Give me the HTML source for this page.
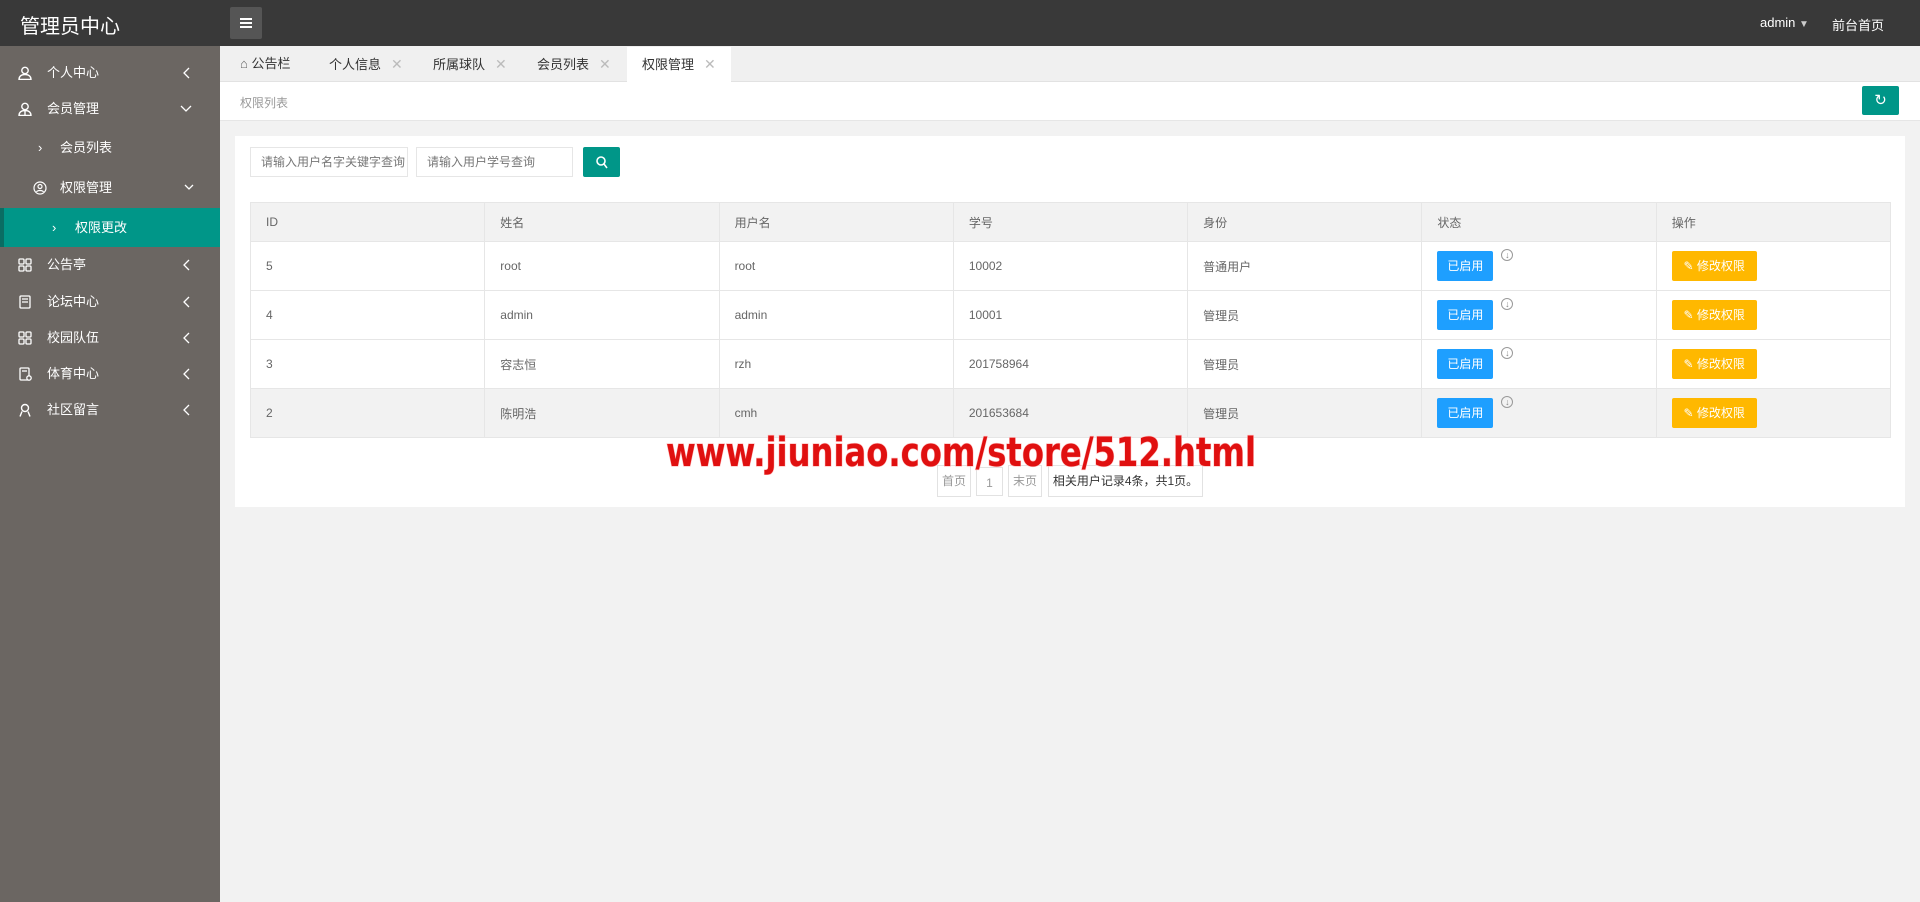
<!DOCTYPE html>
<html><head><meta charset="utf-8"><style>
*{margin:0;padding:0;box-sizing:border-box}
body{width:1920px;height:902px;overflow:hidden;background:#f2f2f2;font-family:"Liberation Sans","Noto Sans CJK SC",sans-serif;font-size:13px;color:#666;position:relative}
.abs{position:absolute}
.hdr{left:0;top:0;width:1920px;height:46px;background:#393939}
.side{left:0;top:46px;width:220px;height:856px;background:#6b6662}
.mi{position:absolute;left:0;width:220px;color:#fff;font-size:13px;height:36px;line-height:36px}
.mi .t{position:absolute;left:47px}
.mi .ic{position:absolute;left:18px;top:11px;width:14px;height:14px}
.mi .ar{position:absolute;left:182px;top:12px;width:8px;height:12px}
.tabs{left:220px;top:46px;width:1700px;height:36px;background:#f0f0f0;border-bottom:1px solid #e2e2e2}
.tab{position:absolute;top:46px;height:36px;line-height:36px;font-size:13px;color:#333}
.x{color:#bbb;font-size:14px;margin-left:10px}
.bc{left:220px;top:82px;width:1700px;height:39px;background:#fff;border-bottom:1px solid #e6e6e6}
.card{left:235px;top:136px;width:1670px;height:371px;background:#fff}
.inp{position:absolute;top:147px;height:30px;border:1px solid #e6e6e6;background:#fff;color:#777;font-size:12px;line-height:28px;padding-left:10px}
table{position:absolute;left:250px;top:202px;width:1641px;border-collapse:collapse}
td,th{border:1px solid #e6e6e6;text-align:left;padding-left:15px;font-weight:normal;color:#666;font-size:12px;width:234px}
th{height:39px;background:#f2f2f2}
td{height:49px}
.b1{display:inline-block;width:56px;height:30px;line-height:30px;text-align:center;background:#1E9FFF;color:#fff;border-radius:2px;font-size:12px;vertical-align:middle}
.b2{display:inline-block;width:85px;height:30px;line-height:30px;text-align:center;background:#FFB800;color:#fff;border-radius:2px;font-size:12px}
.circ{display:inline-block;width:12px;height:12px;border:1px solid #999;border-radius:50%;font-size:9px;line-height:10px;text-align:center;color:#888;margin-left:8px;vertical-align:top;margin-top:-2px}
.pg{position:absolute;top:465px;height:32px;border:1px solid #e2e2e2;line-height:30px;text-align:center;font-size:12px;color:#999;background:#fff}
</style></head><body>
<div class="abs hdr"></div>
<div class="abs" style="left:20px;top:10px;color:#fff;font-size:20px">管理员中心</div>
<div class="abs" style="left:230px;top:7px;width:32px;height:32px;background:#555;border-radius:2px">
<div class="abs" style="left:10px;top:11px;width:12px;height:1.5px;background:#fff"></div>
<div class="abs" style="left:10px;top:15px;width:12px;height:1.5px;background:#fff"></div>
<div class="abs" style="left:10px;top:19px;width:12px;height:1.5px;background:#fff"></div></div>
<div class="abs" style="left:1760px;top:15px;color:#fff;font-size:13px">admin <span style="font-size:10px;color:#ccc">▼</span></div>
<div class="abs" style="left:1832px;top:15px;color:#fff;font-size:13px">前台首页</div>

<div class="abs side"></div>
<div class="mi" style="top:55px"><svg class="ic" viewBox="0 0 14 14"><circle cx="7" cy="4.5" r="3.2" fill="none" stroke="#fff" stroke-width="1.4"/><path d="M1 13.5c0-3.5 2.7-5 6-5s6 1.5 6 5z" fill="none" stroke="#fff" stroke-width="1.4"/></svg><span class="t">个人中心</span><svg class="ar" viewBox="0 0 8 12"><path d="M7 1L2 6l5 5" fill="none" stroke="#fff" stroke-width="1.3"/></svg></div>
<div class="mi" style="top:91px"><svg class="ic" viewBox="0 0 14 14"><circle cx="7" cy="4.5" r="3.2" fill="none" stroke="#fff" stroke-width="1.4"/><path d="M1 13.5c0-3.5 2.7-5 6-5s6 1.5 6 5zM7 9v4.5" fill="none" stroke="#fff" stroke-width="1.4"/></svg><span class="t">会员管理</span><svg class="ar" style="left:180px;width:12px;height:8px;top:14px" viewBox="0 0 12 8"><path d="M1 1l5 5 5-5" fill="none" stroke="#fff" stroke-width="1.3"/></svg></div>
<div class="mi" style="top:130px"><span class="t" style="left:38px">›</span><span class="t" style="left:60px">会员列表</span></div>
<div class="mi" style="top:170px"><svg class="ic" style="left:33px" viewBox="0 0 14 14"><circle cx="7" cy="7" r="6" fill="none" stroke="#fff" stroke-width="1.2"/><circle cx="7" cy="5.5" r="2" fill="none" stroke="#fff" stroke-width="1.2"/><path d="M3.5 11c1-2 6-2 7 0" fill="none" stroke="#fff" stroke-width="1.2"/></svg><span class="t" style="left:60px">权限管理</span><svg class="ar" style="left:184px;width:10px;height:7px;top:14px" viewBox="0 0 10 7"><path d="M1 1l4 4 4-4" fill="none" stroke="#fff" stroke-width="1.3"/></svg></div>
<div class="abs" style="left:0;top:208px;width:220px;height:39px;background:#009688;border-left:4px solid #0a6d63"></div>
<div class="mi" style="top:210px"><span class="t" style="left:52px">›</span><span class="t" style="left:75px">权限更改</span></div>
<div class="mi" style="top:247px"><svg class="ic" viewBox="0 0 14 14" fill="none" stroke="#fff" stroke-width="1.3"><rect x="1" y="1" width="5" height="5" rx="1"/><rect x="8" y="1" width="5" height="5" rx="1"/><rect x="1" y="8" width="5" height="5" rx="1"/><rect x="8" y="8" width="5" height="5" rx="1"/></svg><span class="t">公告亭</span><svg class="ar" viewBox="0 0 8 12"><path d="M7 1L2 6l5 5" fill="none" stroke="#fff" stroke-width="1.3"/></svg></div>
<div class="mi" style="top:284px"><svg class="ic" viewBox="0 0 14 14" fill="none" stroke="#fff" stroke-width="1.3"><rect x="2" y="1" width="10" height="12" rx="1"/><path d="M4 4h6M4 7h6"/></svg><span class="t">论坛中心</span><svg class="ar" viewBox="0 0 8 12"><path d="M7 1L2 6l5 5" fill="none" stroke="#fff" stroke-width="1.3"/></svg></div>
<div class="mi" style="top:320px"><svg class="ic" viewBox="0 0 14 14" fill="none" stroke="#fff" stroke-width="1.3"><rect x="1" y="1" width="5" height="5" rx="1"/><rect x="8" y="1" width="5" height="5" rx="1"/><rect x="1" y="8" width="5" height="5" rx="1"/><rect x="8" y="8" width="5" height="5" rx="1"/></svg><span class="t">校园队伍</span><svg class="ar" viewBox="0 0 8 12"><path d="M7 1L2 6l5 5" fill="none" stroke="#fff" stroke-width="1.3"/></svg></div>
<div class="mi" style="top:356px"><svg class="ic" viewBox="0 0 14 14" fill="none" stroke="#fff" stroke-width="1.3"><rect x="2" y="1" width="9" height="12" rx="1"/><path d="M4 4h5"/><circle cx="11" cy="11" r="2.2" fill="#6b6662"/></svg><span class="t">体育中心</span><svg class="ar" viewBox="0 0 8 12"><path d="M7 1L2 6l5 5" fill="none" stroke="#fff" stroke-width="1.3"/></svg></div>
<div class="mi" style="top:392px"><svg class="ic" viewBox="0 0 14 14" fill="none" stroke="#fff" stroke-width="1.4"><circle cx="7" cy="5" r="3.5"/><path d="M2 13.5l2-5M12 13.5l-2-5"/></svg><span class="t">社区留言</span><svg class="ar" viewBox="0 0 8 12"><path d="M7 1L2 6l5 5" fill="none" stroke="#fff" stroke-width="1.3"/></svg></div>

<div class="abs tabs"></div>
<div class="tab" style="left:240px"><span style="color:#666">⌂</span> 公告栏</div>
<div class="tab" style="left:329px">个人信息<span class="x">✕</span></div>
<div class="tab" style="left:433px">所属球队<span class="x">✕</span></div>
<div class="tab" style="left:537px">会员列表<span class="x">✕</span></div>
<div class="abs" style="left:627px;top:47px;width:104px;height:36px;background:#fff"></div>
<div class="tab" style="left:642px">权限管理<span class="x">✕</span></div>
<div class="abs bc"></div>
<div class="abs" style="left:240px;top:94px;color:#999;font-size:12px">权限列表</div>
<div class="abs" style="left:1862px;top:86px;width:37px;height:29px;background:#009688;border-radius:2px;color:#fff;text-align:center;line-height:29px;font-size:15px">↻</div>

<div class="abs card"></div>
<div class="inp" style="left:250px;width:158px">请输入用户名字关键字查询</div>
<div class="inp" style="left:416px;width:157px">请输入用户学号查询</div>
<div class="abs" style="left:583px;top:147px;width:37px;height:30px;background:#009688;border-radius:2px"><svg class="abs" style="left:13px;top:9px" width="12" height="13" viewBox="0 0 12 13" fill="none" stroke="#fff" stroke-width="1.6"><circle cx="5" cy="5" r="4"/><path d="M8 8l3 4"/></svg></div>

<table>
<tr><th>ID</th><th>姓名</th><th>用户名</th><th>学号</th><th>身份</th><th>状态</th><th>操作</th></tr>
<tr><td>5</td><td>root</td><td>root</td><td>10002</td><td>普通用户</td><td><span class="b1">已启用</span><span class="circ">↓</span></td><td><span class="b2">✎ 修改权限</span></td></tr>
<tr><td>4</td><td>admin</td><td>admin</td><td>10001</td><td>管理员</td><td><span class="b1">已启用</span><span class="circ">↓</span></td><td><span class="b2">✎ 修改权限</span></td></tr>
<tr><td>3</td><td>容志恒</td><td>rzh</td><td>201758964</td><td>管理员</td><td><span class="b1">已启用</span><span class="circ">↓</span></td><td><span class="b2">✎ 修改权限</span></td></tr>
<tr style="background:#f2f2f2"><td>2</td><td>陈明浩</td><td>cmh</td><td>201653684</td><td>管理员</td><td><span class="b1">已启用</span><span class="circ">↓</span></td><td><span class="b2">✎ 修改权限</span></td></tr>
</table>

<div class="pg" style="left:937px;width:34px">首页</div>
<div class="pg" style="left:976px;width:27px;top:467px;height:29px">1</div>
<div class="pg" style="left:1008px;width:34px">末页</div>
<div class="pg" style="left:1048px;width:155px;color:#333">相关用户记录4条，共1页。</div>

<svg class="abs" style="left:660px;top:425px" width="610" height="50"><text x="6" y="41" textLength="590" lengthAdjust="spacingAndGlyphs" font-family="DejaVu Sans" font-weight="bold" font-size="40" fill="#e01010" stroke="#fbb" stroke-width="1.2" paint-order="stroke">www.jiuniao.com/store/512.html</text></svg>
</body></html>
